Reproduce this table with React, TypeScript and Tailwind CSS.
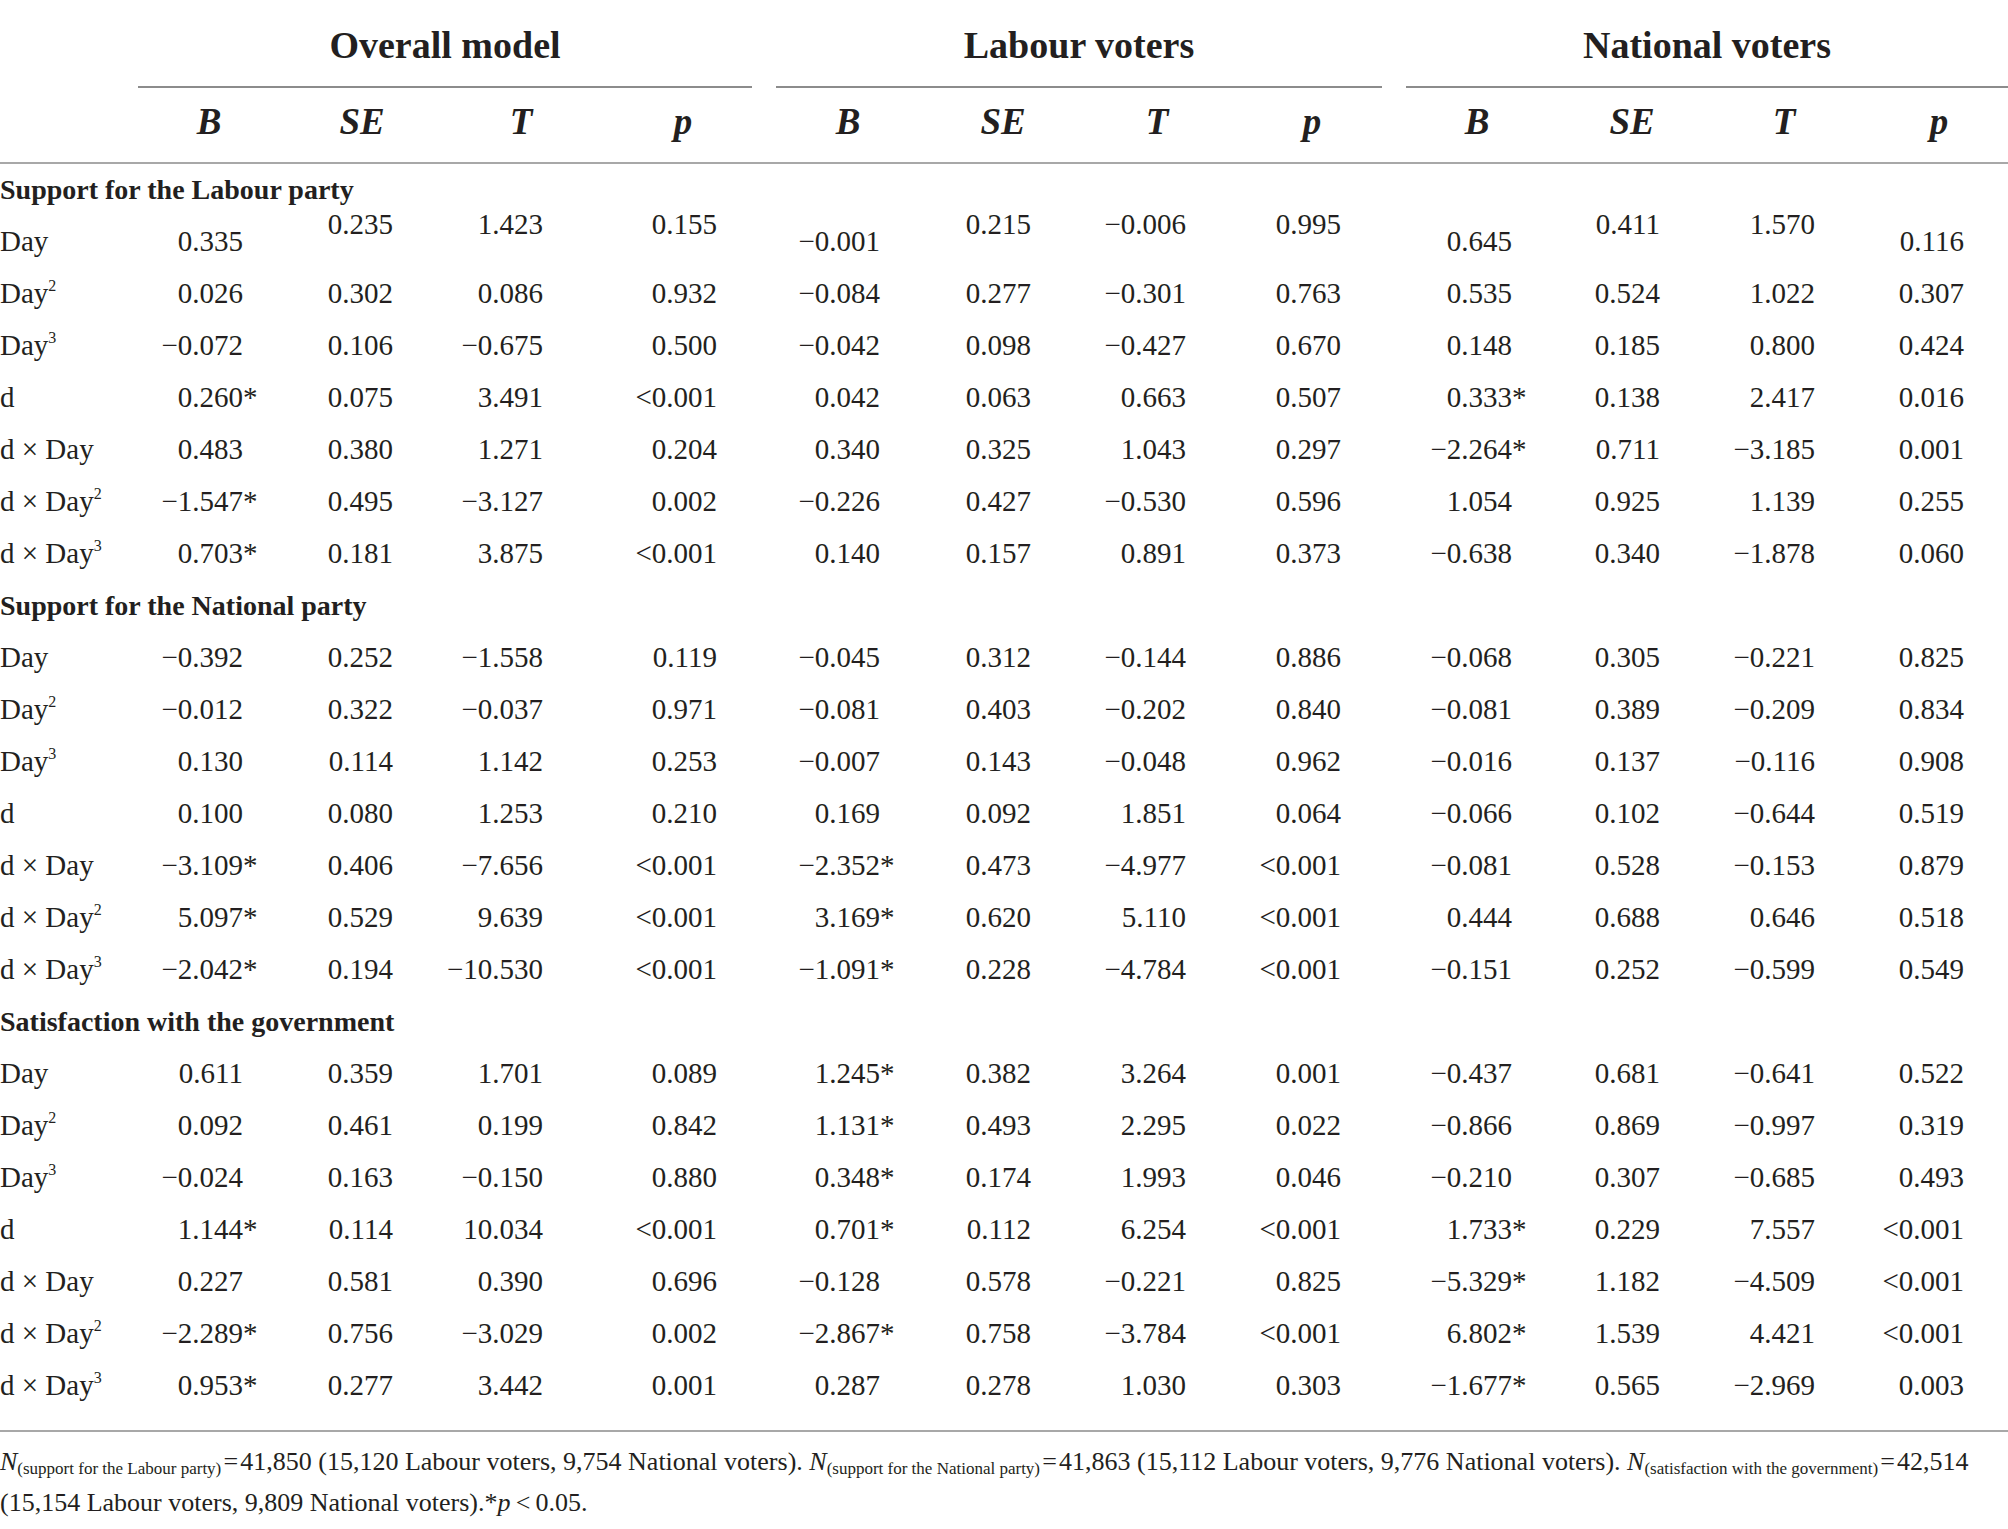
import React from "react";

type Cell = string;
type Row = { label: string; sup?: string; values: Cell[] };
type Section = { title: string; rows: Row[] };

const ROW_GRID =
  "grid grid-cols-[138px_105px_150px_150px_174px_163px_151px_155px_155px_171px_148px_155px_149px_44px]";

// header letters sit a little left of the right edge of each value column
const HEADER_COLS = [
  { text: "B", pad: "pr-[34px]" },
  { text: "SE", pad: "pr-[31px]" },
  { text: "T", pad: "pr-[22px]" },
  { text: "p", pad: "pr-[34px]" },
  { text: "B", pad: "pr-[32px]" },
  { text: "SE", pad: "pr-[28px]" },
  { text: "T", pad: "pr-[29px]" },
  { text: "p", pad: "pr-[29px]" },
  { text: "B", pad: "pr-[35px]" },
  { text: "SE", pad: "pr-[28px]" },
  { text: "T", pad: "pr-[31px]" },
  { text: "p", pad: "pr-[25px]" },
];

const r = (label: string, sup: string | undefined, line: string): Row => ({
  label,
  sup,
  values: line.split(" "),
});

// "^" marks a value set higher in its cell, as in the printed table
const SECTIONS: Section[] = [
  {
    title: "Support for the Labour party",
    rows: [
      r("Day", undefined, "0.335 ^0.235 ^1.423 ^0.155 -0.001 ^0.215 ^-0.006 ^0.995 0.645 ^0.411 ^1.570 0.116"),
      r("Day", "2", "0.026 0.302 0.086 0.932 -0.084 0.277 -0.301 0.763 0.535 0.524 1.022 0.307"),
      r("Day", "3", "-0.072 0.106 -0.675 0.500 -0.042 0.098 -0.427 0.670 0.148 0.185 0.800 0.424"),
      r("d", undefined, "0.260* 0.075 3.491 <0.001 0.042 0.063 0.663 0.507 0.333* 0.138 2.417 0.016"),
      r("d × Day", undefined, "0.483 0.380 1.271 0.204 0.340 0.325 1.043 0.297 -2.264* 0.711 -3.185 0.001"),
      r("d × Day", "2", "-1.547* 0.495 -3.127 0.002 -0.226 0.427 -0.530 0.596 1.054 0.925 1.139 0.255"),
      r("d × Day", "3", "0.703* 0.181 3.875 <0.001 0.140 0.157 0.891 0.373 -0.638 0.340 -1.878 0.060"),
    ],
  },
  {
    title: "Support for the National party",
    rows: [
      r("Day", undefined, "-0.392 0.252 -1.558 0.119 -0.045 0.312 -0.144 0.886 -0.068 0.305 -0.221 0.825"),
      r("Day", "2", "-0.012 0.322 -0.037 0.971 -0.081 0.403 -0.202 0.840 -0.081 0.389 -0.209 0.834"),
      r("Day", "3", "0.130 0.114 1.142 0.253 -0.007 0.143 -0.048 0.962 -0.016 0.137 -0.116 0.908"),
      r("d", undefined, "0.100 0.080 1.253 0.210 0.169 0.092 1.851 0.064 -0.066 0.102 -0.644 0.519"),
      r("d × Day", undefined, "-3.109* 0.406 -7.656 <0.001 -2.352* 0.473 -4.977 <0.001 -0.081 0.528 -0.153 0.879"),
      r("d × Day", "2", "5.097* 0.529 9.639 <0.001 3.169* 0.620 5.110 <0.001 0.444 0.688 0.646 0.518"),
      r("d × Day", "3", "-2.042* 0.194 -10.530 <0.001 -1.091* 0.228 -4.784 <0.001 -0.151 0.252 -0.599 0.549"),
    ],
  },
  {
    title: "Satisfaction with the government",
    rows: [
      r("Day", undefined, "0.611 0.359 1.701 0.089 1.245* 0.382 3.264 0.001 -0.437 0.681 -0.641 0.522"),
      r("Day", "2", "0.092 0.461 0.199 0.842 1.131* 0.493 2.295 0.022 -0.866 0.869 -0.997 0.319"),
      r("Day", "3", "-0.024 0.163 -0.150 0.880 0.348* 0.174 1.993 0.046 -0.210 0.307 -0.685 0.493"),
      r("d", undefined, "1.144* 0.114 10.034 <0.001 0.701* 0.112 6.254 <0.001 1.733* 0.229 7.557 <0.001"),
      r("d × Day", undefined, "0.227 0.581 0.390 0.696 -0.128 0.578 -0.221 0.825 -5.329* 1.182 -4.509 <0.001"),
      r("d × Day", "2", "-2.289* 0.756 -3.029 0.002 -2.867* 0.758 -3.784 <0.001 6.802* 1.539 4.421 <0.001"),
      r("d × Day", "3", "0.953* 0.277 3.442 0.001 0.287 0.278 1.030 0.303 -1.677* 0.565 -2.969 0.003"),
    ],
  },
];

function ValueCell({ raw }: { raw: string }) {
  let v = raw;
  const raised = v.startsWith("^");
  if (raised) v = v.slice(1);
  const star = v.endsWith("*");
  if (star) v = v.slice(0, -1);
  v = v.replace("-", "\u2212");

  return (
    <div
      className={
        raised
          ? "h-[52px] flex items-center justify-end pb-[34px]"
          : "h-[52px] flex items-center justify-end"
      }
    >
      <span className="whitespace-nowrap">{v}</span>
      <span className="w-0 overflow-visible whitespace-nowrap">
        {star ? "*" : ""}
      </span>
    </div>
  );
}

function DataRow({ row }: { row: Row }) {
  return (
    <div className={`${ROW_GRID} grid-rows-[52px] h-[52px] text-[29px]`}>
      <div className="h-[52px] flex items-center whitespace-nowrap">
        {row.label}
        {row.sup && <sup className="text-[16px]">{row.sup}</sup>}
      </div>
      {row.values.map((v, i) => (
        <ValueCell key={i} raw={v} />
      ))}
      <div />
    </div>
  );
}

export default function App() {
  return (
    <div className="w-[2008px] min-h-[1529px] bg-white text-[#231f20] font-['Liberation_Serif',serif]">
      {/* group headings */}
      <div className="flex pl-[138px] gap-[24px]">
        <div className="w-[614px] h-[88px] pt-[4px] flex items-center justify-center border-b-2 border-[#8c8c8c] text-[38px] font-bold">
          Overall model
        </div>
        <div className="w-[606px] h-[88px] pt-[4px] flex items-center justify-center border-b-2 border-[#8c8c8c] text-[38px] font-bold">
          Labour voters
        </div>
        <div className="w-[602px] h-[88px] pt-[4px] flex items-center justify-center border-b-2 border-[#8c8c8c] text-[38px] font-bold">
          National voters
        </div>
      </div>

      {/* B / SE / T / p */}
      <div
        className={`${ROW_GRID} h-[76px] pb-[6px] border-b-2 border-[#a8a8a8] text-[37px] font-bold italic`}
      >
        <div />
        {HEADER_COLS.map((c, i) => (
          <div key={i} className={`flex items-center justify-end ${c.pad}`}>
            <span className="w-0 flex justify-center">{c.text}</span>
          </div>
        ))}
        <div />
      </div>

      <div className="pb-[18px] border-b-2 border-[#a8a8a8]">
        {SECTIONS.map((s) => (
          <div key={s.title}>
            <div className="h-[52px] flex items-center text-[28px] font-bold">
              {s.title}
            </div>
            {s.rows.map((row, i) => (
              <DataRow key={i} row={row} />
            ))}
          </div>
        ))}
      </div>

      {/* note */}
      <div className="pt-[9px] text-[26px] leading-[41px]">
        <div className="whitespace-nowrap">
          <i>N</i>
          <sub className="text-[17px]">(support for the Labour party)</sub>
          {"\u200A=\u200A41,850 (15,120 Labour voters, 9,754 National voters). "}
          <i>N</i>
          <sub className="text-[17px]">(support for the National party)</sub>
          {"\u200A=\u200A41,863 (15,112 Labour voters, 9,776 National voters). "}
          <i>N</i>
          <sub className="text-[17px]">(satisfaction with the government)</sub>
          {"\u200A=\u200A42,514"}
        </div>
        <div className="whitespace-nowrap">
          (15,154 Labour voters, 9,809 National voters).*<i>p</i>
          {"\u2009<\u20090.05."}
        </div>
      </div>
    </div>
  );
}
